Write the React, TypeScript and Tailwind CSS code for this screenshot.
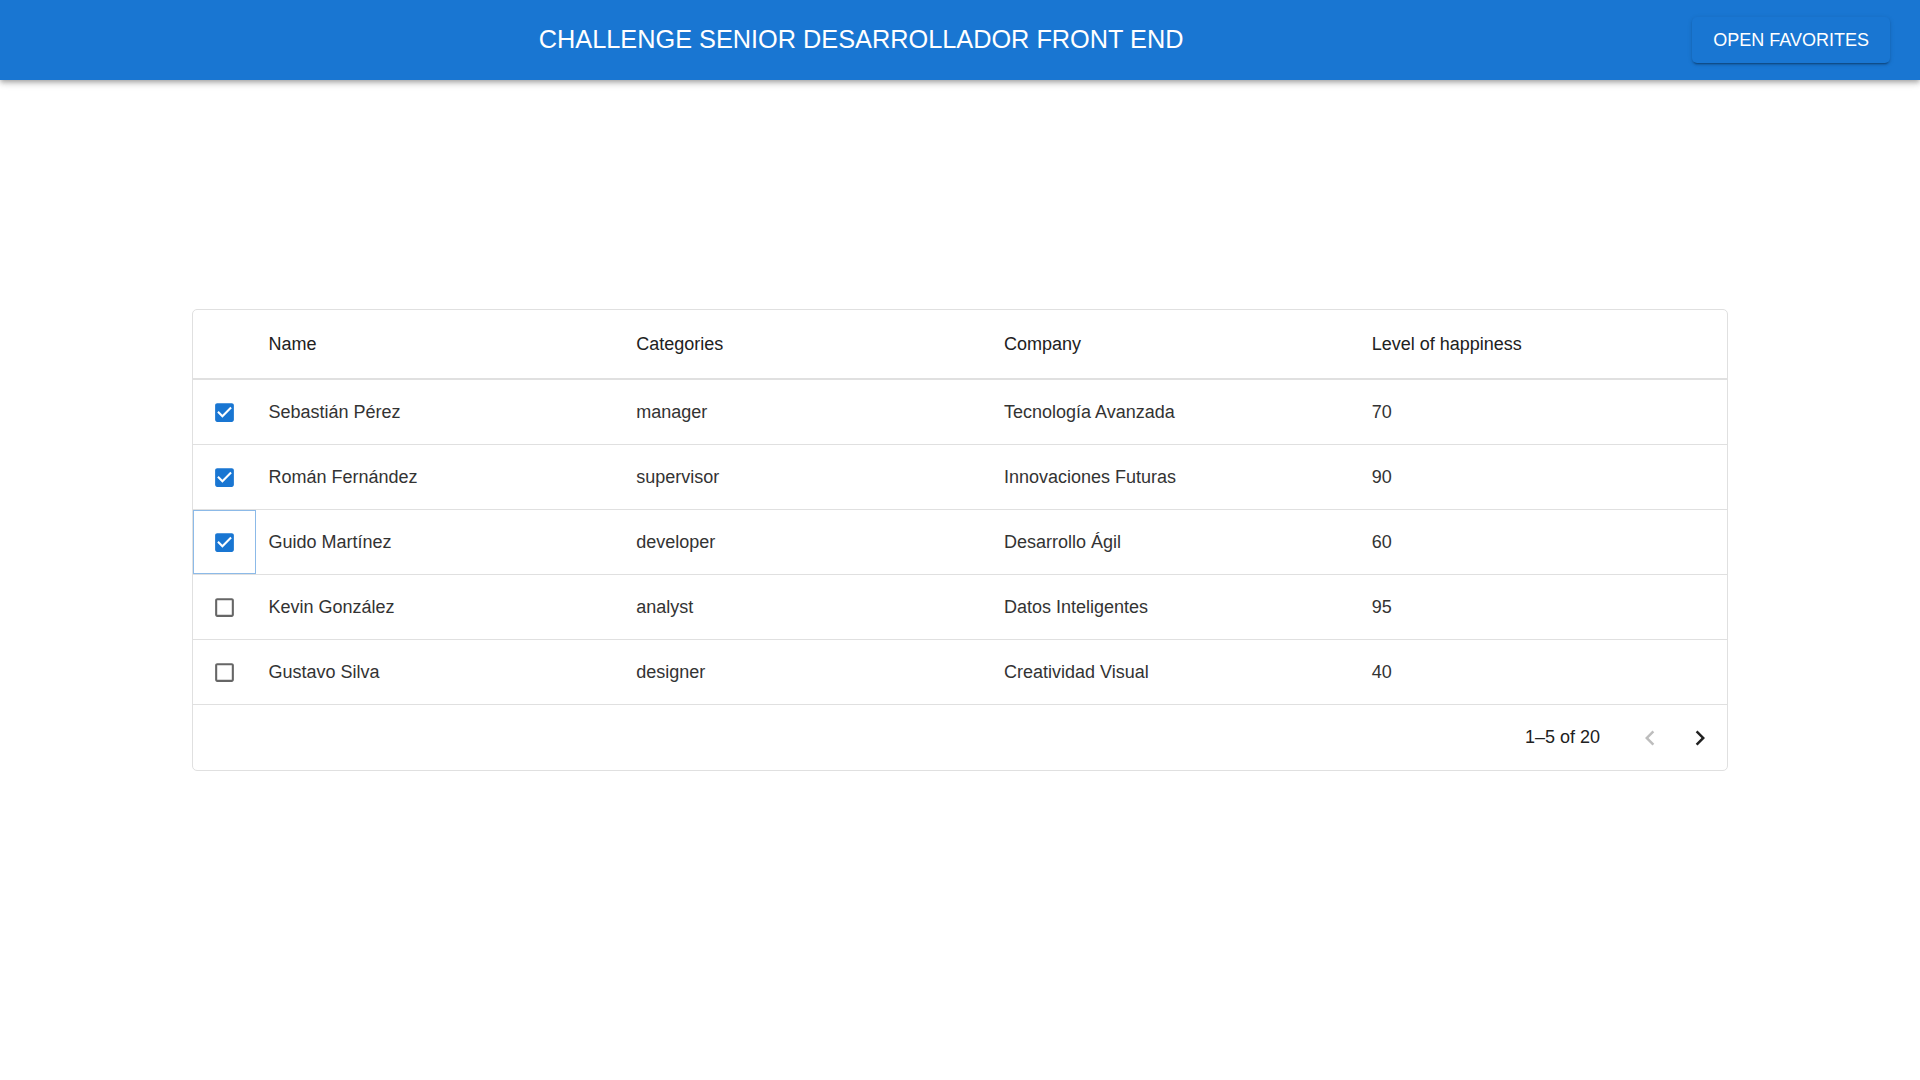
import React from "react";

type Row = {
  name: string;
  category: string;
  company: string;
  happiness: number;
  selected: boolean;
  focused?: boolean;
};

const rows: Row[] = [
  { name: "Sebastián Pérez", category: "manager", company: "Tecnología Avanzada", happiness: 70, selected: true },
  { name: "Román Fernández", category: "supervisor", company: "Innovaciones Futuras", happiness: 90, selected: true },
  { name: "Guido Martínez", category: "developer", company: "Desarrollo Ágil", happiness: 60, selected: true, focused: true },
  { name: "Kevin González", category: "analyst", company: "Datos Inteligentes", happiness: 95, selected: false },
  { name: "Gustavo Silva", category: "designer", company: "Creatividad Visual", happiness: 40, selected: false },
];

const columns = ["Name", "Categories", "Company", "Level of happiness"];

function CheckBox({ checked }: { checked: boolean }) {
  if (checked) {
    return (
      <svg viewBox="0 0 24 24" className="w-[25px] h-[25px] fill-[#1976d2]">
        <path d="M19 3H5c-1.11 0-2 .9-2 2v14c0 1.1.89 2 2 2h14c1.11 0 2-.9 2-2V5c0-1.1-.89-2-2-2zm-9 14l-5-5 1.41-1.41L10 14.17l7.59-7.59L19 8l-9 9z" />
      </svg>
    );
  }
  return (
    <svg viewBox="0 0 24 24" className="w-[25px] h-[25px] fill-[#666666]">
      <path d="M19 5v14H5V5h14m0-2H5c-1.1 0-2 .9-2 2v14c0 1.1.9 2 2 2h14c1.1 0 2-.9 2-2V5c0-1.1-.9-2-2-2z" />
    </svg>
  );
}

export default function App() {
  return (
    <div className="min-h-screen bg-white font-['Liberation_Sans',Arial,sans-serif]">
      <header className="relative z-10 h-[80px] bg-[#1976d2] flex items-center px-[30px] text-white shadow-[0_2px_4px_-1px_rgba(0,0,0,0.2),0_4px_5px_0_rgba(0,0,0,0.14),0_1px_10px_0_rgba(0,0,0,0.12)]">
        <h1 className="flex-1 text-center text-[25.3px] font-normal leading-none">
          CHALLENGE SENIOR DESARROLLADOR FRONT END
        </h1>
        <button className="h-[46px] px-[21px] rounded-[5px] bg-[#1976d2] text-[18px] text-white uppercase leading-none shadow-[0_3px_1px_-2px_rgba(0,0,0,0.2),0_2px_2px_0_rgba(0,0,0,0.14),0_1px_5px_0_rgba(0,0,0,0.12)]">
          OPEN FAVORITES
        </button>
      </header>

      <main className="w-[80%] mx-auto mt-[229px]">
        <div className="border border-[#e0e0e0] rounded-[5px] text-[18px]">
          <div className="grid grid-cols-[63px_1fr_1fr_1fr_1fr] h-[70px] border-b-2 border-[#e0e0e0] items-center text-[#212121]">
            <div />
            {columns.map((c) => (
              <div key={c} className="px-[12.5px]">
                {c}
              </div>
            ))}
          </div>

          {rows.map((r) => (
            <div
              key={r.name}
              className="grid grid-cols-[63px_1fr_1fr_1fr_1fr] h-[65px] border-b border-[#e0e0e0] text-[#333333]"
            >
              <div
                className={
                  r.focused
                    ? "flex items-center justify-center border border-[#8cbae8]"
                    : "flex items-center justify-center"
                }
              >
                <CheckBox checked={r.selected} />
              </div>
              <div className="px-[12.5px] flex items-center">{r.name}</div>
              <div className="px-[12.5px] flex items-center">{r.category}</div>
              <div className="px-[12.5px] flex items-center">{r.company}</div>
              <div className="px-[12.5px] flex items-center">{r.happiness}</div>
            </div>
          ))}

          <div className="h-[65px] flex items-center justify-end pr-[2px] text-[#212121]">
            <span>1–5 of 20</span>
            <div className="flex ml-[25px]">
              <button className="w-[50px] h-[50px] flex items-center justify-center">
                <svg viewBox="0 0 24 24" className="w-[30px] h-[30px] fill-[#bdbdbd]">
                  <path d="M15.41 16.59 10.83 12l4.58-4.59L14 6l-6 6 6 6z" />
                </svg>
              </button>
              <button className="w-[50px] h-[50px] flex items-center justify-center">
                <svg viewBox="0 0 24 24" className="w-[30px] h-[30px] fill-[#212121]">
                  <path d="M8.59 16.59 13.17 12 8.59 7.41 10 6l6 6-6 6z" />
                </svg>
              </button>
            </div>
          </div>
        </div>
      </main>
    </div>
  );
}
